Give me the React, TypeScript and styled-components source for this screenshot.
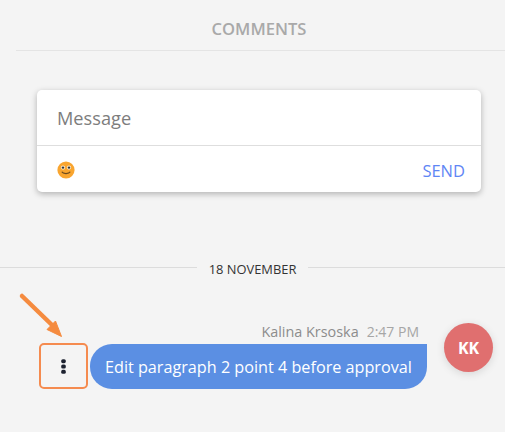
import React from "react";
import styled, { createGlobalStyle } from "styled-components";

const Global = createGlobalStyle`
  html, body { margin: 0; padding: 0; background: #f4f4f4; }
  body { font-family: "Open Sans", "Noto Sans", "Liberation Sans", sans-serif; overflow: hidden; }
`;

const Page = styled.div`
  position: relative;
  width: 505px;
  height: 432px;
  overflow: hidden;
  background: #f4f4f4;
`;

const Header = styled.h2`
  margin: 0 0 0 16px;
  height: 51px;
  box-sizing: border-box;
  border-bottom: 1px solid #e4e4e4;
  display: flex;
  align-items: center;
  justify-content: center;
  padding: 6px 3px 0 0;
  font-size: 16.6px;
  font-weight: 600;
  color: #a9a9a9;
`;

const Card = styled.div`
  margin: 39px 24px 0 37px;
  height: 102px;
  background: #fff;
  border-radius: 5px;
  box-shadow: 0 2px 6px rgba(0, 0, 0, 0.28);
  display: flex;
  flex-direction: column;
`;

const InputRow = styled.div`
  height: 56px;
  box-sizing: border-box;
  border-bottom: 1px solid #dedede;
  padding: 0 20px;
  display: flex;
  align-items: center;
  font-size: 18.2px;
  color: #7d7d7d;
`;

const ActionRow = styled.div`
  flex: 1;
  padding: 2px 16px 0 20px;
  display: flex;
  align-items: center;
  justify-content: space-between;
`;

const Send = styled.span`
  font-size: 16.5px;
  color: #5f86f5;
`;

const DateRow = styled.div`
  margin-top: 67px;
  display: flex;
  align-items: center;
  gap: 12px;
  height: 16px;
  font-size: 12.9px;
  font-weight: 500;
  color: #333;
`;

const DateLabel = styled.span`
  padding-top: 3px;
`;

const DateLine = styled.div`
  flex: 1;
  height: 1px;
  background: #dcdcdc;
`;

const Thread = styled.div`
  margin-top: 45px;
  padding: 0 12px 0 39px;
  display: flex;
  align-items: flex-start;
  gap: 17px;
`;

const MessageColumn = styled.div`
  width: 388px;
  display: flex;
  flex-direction: column;
  align-items: stretch;
`;

const Meta = styled.div`
  display: flex;
  justify-content: flex-end;
  gap: 8px;
  height: 23px;
  padding-right: 8px;
  align-items: center;
  font-size: 14.4px;
  color: #8c8c8c;
`;

const Time = styled.span`
  font-size: 14px;
  color: #a6a6a6;
`;

const MessageRow = styled.div`
  display: flex;
  align-items: flex-end;
  gap: 2px;
`;

const MenuButton = styled.button`
  width: 49px;
  height: 46px;
  padding: 0;
  box-sizing: border-box;
  background: transparent;
  border: 2px solid #f58b4f;
  border-radius: 5px;
  display: flex;
  align-items: center;
  justify-content: center;
`;

const Bubble = styled.div`
  flex: 1;
  height: 45px;
  box-sizing: border-box;
  background: #5b8fe3;
  border-radius: 22px 0 22px 22px;
  padding: 0 14px 0 15px;
  display: flex;
  align-items: center;
  font-size: 16.2px;
  color: #fff;
  white-space: nowrap;
`;

const Avatar = styled.div`
  width: 49px;
  height: 49px;
  margin-top: 3px;
  border-radius: 50%;
  background: #e06f6f;
  box-shadow: 0 2px 8px rgba(0, 0, 0, 0.12);
  color: #fff;
  font-size: 16px;
  font-weight: 700;
  display: flex;
  align-items: center;
  justify-content: center;
  flex: none;
`;

const Arrow = styled.svg`
  position: absolute;
  left: 16px;
  top: 290px;
`;

export default function App() {
  return (
    <Page>
      <Global />
      <Header>COMMENTS</Header>
      <Card>
        <InputRow>Message</InputRow>
        <ActionRow>
          <svg width="18" height="18" viewBox="0 0 18 18">
            <circle cx="9" cy="9" r="8.6" fill="#f9a52f" />
            <circle cx="6" cy="6.6" r="2.1" fill="#f6e9d2" />
            <circle cx="12" cy="6.6" r="2.1" fill="#f6e9d2" />
            <circle cx="6" cy="6.6" r="1.2" fill="#333" />
            <circle cx="12" cy="6.6" r="1.2" fill="#333" />
            <path d="M4.8 10.8 C6 13.2 12 13.2 13.2 10.8" fill="none" stroke="#6b4a1e" strokeWidth="1.2" />
          </svg>
          <Send>SEND</Send>
        </ActionRow>
      </Card>
      <DateRow>
        <DateLine />
        <DateLabel>18 NOVEMBER</DateLabel>
        <DateLine />
      </DateRow>
      <Thread>
        <MessageColumn>
          <Meta>
            <span>Kalina Krsoska</span>
            <Time>2:47 PM</Time>
          </Meta>
          <MessageRow>
            <MenuButton aria-label="More">
              <svg width="5" height="15" viewBox="0 0 5 15">
                <rect x="0.2" y="0.2" width="4.6" height="4" rx="1.6" fill="#1d2230" />
                <rect x="0.2" y="5.5" width="4.6" height="4" rx="1.6" fill="#1d2230" />
                <rect x="0.2" y="10.8" width="4.6" height="4" rx="1.6" fill="#1d2230" />
              </svg>
            </MenuButton>
            <Bubble>Edit paragraph 2 point 4 before approval</Bubble>
          </MessageRow>
        </MessageColumn>
        <Avatar>KK</Avatar>
      </Thread>
      <Arrow width="50" height="50" viewBox="0 0 50 50">
        <path d="M6 6 L36 35" stroke="#f58b3f" strokeWidth="4.5" strokeLinecap="round" fill="none" />
        <path d="M45.5 46.5 L31 39.5 L39.5 31 Z" fill="#f58b3f" stroke="#f58b3f" strokeWidth="1" />
      </Arrow>
    </Page>
  );
}
